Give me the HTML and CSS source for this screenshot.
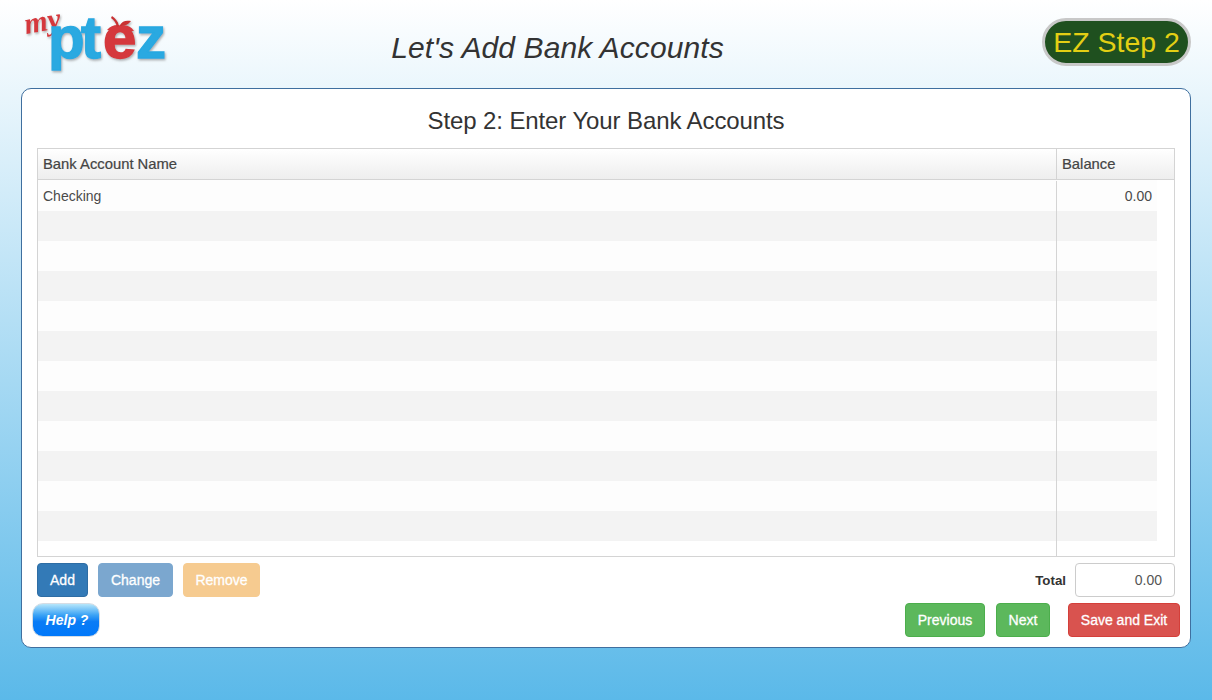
FILE: index.html
```html
<!DOCTYPE html>
<html lang="en">
<head>
  <meta charset="UTF-8" />
  <title>Let's Add Bank Accounts</title>
  <link rel="stylesheet" href="styles.css">
</head>
<body>
  <div class="top-bar">
    <svg class="logo" width="150" height="72" viewBox="0 0 150 72">
      <defs>
        <filter id="logoShadow" x="-10%" y="-10%" width="120%" height="120%">
          <feDropShadow dx="1" dy="1.5" stdDeviation="1.2" flood-color="#777" flood-opacity="0.6" />
        </filter>
      </defs>
      <g filter="url(#logoShadow)">
        <text class="logo-my" x="5" y="26" transform="rotate(-10 5 26)">my</text>
        <text class="logo-blue" x="27 60" y="50">pt<tspan class="logo-red" x="82">e</tspan><tspan x="115">z</tspan></text>
        <path d="M86 22 C90 17 97 16 100 18 C104 16 110 18 113 23 L100 24 Z" fill="#d5383c" />
        <path d="M91 8 C94 10 97 13 98 18 L96 19 C95 15 93 12 90 10 Z" fill="#c93033" />
        <path d="M99 17 C101 13 105 12 110 13 C108 16 104 18 99 18 Z" fill="#c93033" />
      </g>
    </svg>
    <div class="page-title">Let's Add Bank Accounts</div>
    <div class="step-badge">EZ Step 2</div>
  </div>

  <div class="main-card">
    <h2>Step 2: Enter Your Bank Accounts</h2>

    <div class="grid-box">
      <div class="grid-head">
        <div class="col-name">Bank Account Name</div>
        <div class="col-balance">Balance</div>
      </div>
      <div class="grid-body">
        <div class="grid-row first"><div class="col-name">Checking</div><div class="col-balance num">0.00</div></div>
        <div class="grid-row odd"><div class="col-name"></div><div class="col-balance"></div></div>
        <div class="grid-row"><div class="col-name"></div><div class="col-balance"></div></div>
        <div class="grid-row odd"><div class="col-name"></div><div class="col-balance"></div></div>
        <div class="grid-row"><div class="col-name"></div><div class="col-balance"></div></div>
        <div class="grid-row odd"><div class="col-name"></div><div class="col-balance"></div></div>
        <div class="grid-row"><div class="col-name"></div><div class="col-balance"></div></div>
        <div class="grid-row odd"><div class="col-name"></div><div class="col-balance"></div></div>
        <div class="grid-row"><div class="col-name"></div><div class="col-balance"></div></div>
        <div class="grid-row odd"><div class="col-name"></div><div class="col-balance"></div></div>
        <div class="grid-row"><div class="col-name"></div><div class="col-balance"></div></div>
        <div class="grid-row odd"><div class="col-name"></div><div class="col-balance"></div></div>
      </div>
      <div class="grid-line"></div>
    </div>

    <div class="action-row">
      <button class="btn btn-add">Add</button>
      <button class="btn btn-change">Change</button>
      <button class="btn btn-remove">Remove</button>
      <label class="total-label">Total</label>
      <div class="total-box">0.00</div>
    </div>

    <div class="nav-row">
      <button class="btn-help">Help ?</button>
      <button class="btn btn-green btn-prev">Previous</button>
      <button class="btn btn-green btn-next">Next</button>
      <button class="btn btn-red">Save and Exit</button>
    </div>
  </div>
</body>
</html>
```
FILE: styles.css
```css
html, body {
  height: 700px;
}
body {
  margin: 0;
  overflow: hidden;
  font-family: "Liberation Sans", Arial, sans-serif;
  font-size: 14px;
  color: #333;
  background: linear-gradient(to bottom, #ffffff 0%, #5bb9e9 100%);
}
.top-bar {
  display: flex;
  align-items: flex-start;
  height: 88px;
  padding: 0 21px;
}
.logo {
  flex: none;
  margin-top: 8px;
  overflow: visible;
}
.logo-my {
  font-family: "Liberation Serif", serif;
  font-style: italic;
  font-weight: bold;
  font-size: 30px;
  fill: #d5383c;
}
.logo-blue {
  font-family: "Liberation Sans", Arial, sans-serif;
  font-weight: bold;
  font-size: 60px;
  stroke-width: 1.4px;
  fill: #29a9e1;
  stroke: #29a9e1;
}
.logo-red {
  fill: #d5383c;
  stroke: #d5383c;
}
.page-title {
  flex: 1;
  margin: 30px 0 0 0;
  padding-right: 98px;
  text-align: center;
  font-size: 30px;
  line-height: 36px;
  font-style: italic;
  letter-spacing: 0.1px;
  color: #333;
}
.step-badge {
  flex: none;
  width: 149px;
  height: 48px;
  margin-top: 18px;
  box-sizing: border-box;
  border: 3px solid #c8c8c8;
  border-radius: 24px;
  background: #1f501f;
  color: #e3cf14;
  font-size: 28.5px;
  line-height: 42px;
  text-align: center;
  white-space: nowrap;
}
.main-card {
  box-sizing: border-box;
  width: 1170px;
  height: 560px;
  margin-left: 21px;
  padding: 0 15px;
  background: #fff;
  border: 1px solid #3f6f9f;
  border-radius: 10px;
}
.main-card h2 {
  margin: 0;
  padding-top: 16px;
  height: 59px;
  box-sizing: border-box;
  font-size: 24px;
  line-height: 31px;
  font-weight: normal;
  letter-spacing: -0.1px;
  text-align: center;
}
.grid-box {
  position: relative;
  box-sizing: border-box;
  height: 409px;
  border: 1px solid #d4d4d4;
  overflow: hidden;
}
.grid-head {
  display: flex;
  height: 31px;
  box-sizing: border-box;
  border-bottom: 1px solid #d4d4d4;
  background: linear-gradient(to bottom, #ffffff, #eeeeee);
  font-size: 14.8px;
  line-height: 31px;
  color: #444;
  -webkit-text-stroke: 0.2px #444;
}
.grid-head .col-name {
  width: 1019px;
  padding-left: 5px;
  box-sizing: border-box;
  border-right: 1px solid #d4d4d4;
}
.grid-head .col-balance {
  padding-left: 5px;
}
.grid-body {
  width: 1119px;
}
.grid-row {
  display: flex;
  height: 30px;
  background: #fdfdfd;
  line-height: 30px;
  color: #4a4a4a;
}
.grid-row.first {
  height: 31px;
  line-height: 32px;
}
.grid-row.odd {
  background: #f3f3f3;
}
.grid-row .col-name {
  width: 1019px;
  padding-left: 5px;
  box-sizing: border-box;
}
.grid-row .col-balance {
  flex: 1;
  box-sizing: border-box;
  padding-right: 5px;
}
.num {
  text-align: right;
}
/* column divider runs past the stripes, to the bottom of the box */
.grid-line {
  position: absolute;
  left: 1018px;
  top: 32px;
  bottom: 0;
  width: 1px;
  background: #d4d4d4;
}
.action-row, .nav-row {
  display: flex;
  align-items: center;
}
.action-row {
  margin-top: 6px;
  height: 34px;
}
.nav-row {
  margin: 6px -5px 0 -5px;
  height: 34px;
}
.btn {
  flex: none;
  height: 34px;
  padding: 0;
  box-sizing: border-box;
  border: 1px solid transparent;
  border-radius: 4px;
  color: #fff;
  font-family: "Liberation Sans", Arial, sans-serif;
  font-size: 14px;
  white-space: nowrap;
  -webkit-text-stroke: 0.3px #fff;
}
.btn-add {
  width: 51px;
  background: #337ab7;
  border-color: #2e6da4;
}
.btn-change {
  width: 75px;
  margin-left: 10px;
  background: #7ba7cf;
  border-color: #7ba7cf;
}
.btn-remove {
  width: 77px;
  margin-left: 10px;
  background: #f6cb90;
  border-color: #f6cb90;
}
.total-label {
  margin-left: auto;
  font-size: 13.3px;
  font-weight: bold;
  color: #333;
}
.total-box {
  width: 100px;
  height: 34px;
  margin-left: 9px;
  padding-right: 12px;
  box-sizing: border-box;
  border: 1px solid #ccc;
  border-radius: 4px;
  text-align: right;
  line-height: 32px;
  color: #555;
}
.btn-help {
  flex: none;
  width: 68px;
  height: 34px;
  margin-right: auto;
  padding: 0 0 0 2px;
  box-sizing: border-box;
  border: 1px solid #d5dde5;
  border-radius: 11px;
  background: linear-gradient(to bottom, #b5e6fb 0%, #3aa2f5 35%, #0a7cf5 55%, #0078fa 100%);
  color: #fff;
  font-family: "Liberation Sans", Arial, sans-serif;
  font-size: 14px;
  font-weight: bold;
  font-style: italic;
}
.btn-green {
  background: #5cb85c;
  border-color: #4cae4c;
}
.btn-prev {
  width: 80px;
}
.btn-next {
  width: 54px;
  margin-left: 11px;
}
.btn-red {
  width: 112px;
  margin-left: 18px;
  background: #d9534f;
  border-color: #d43f3a;
}
```
